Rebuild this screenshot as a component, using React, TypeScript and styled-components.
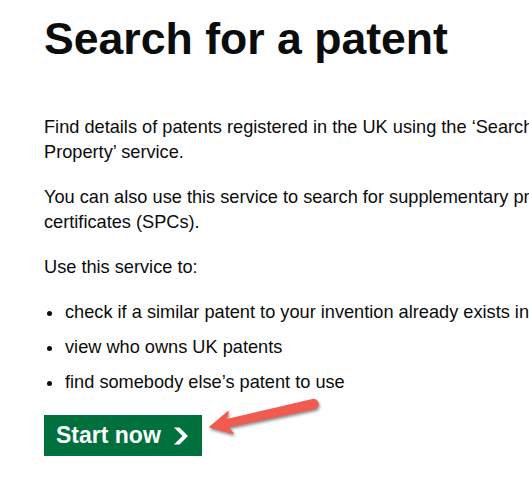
import React from 'react';
import styled, { createGlobalStyle } from 'styled-components';

const GlobalStyle = createGlobalStyle`
  html, body {
    margin: 0;
    padding: 0;
    background: #fff;
    overflow: hidden;
  }
  body {
    font-family: "Liberation Sans", Arial, sans-serif;
    color: #0b0c0c;
  }
`;

const Page = styled.main`
  position: relative;
  width: 630px;
  padding: 14px 0 0 44px;
`;

const Heading = styled.h1`
  margin: 0 0 51px;
  font-size: 44.6px;
  line-height: 50px;
  font-weight: 700;
  color: #0b0c0c;
`;

const Body = styled.p`
  margin: 0 0 20px;
  font-size: 18.2px;
  line-height: 25px;
`;

const BulletList = styled.ul`
  list-style: none;
  margin: 0 0 20px;
  padding: 0;
`;

const Item = styled.li`
  display: flex;
  font-size: 18.2px;
  line-height: 25px;
  margin-bottom: 10px;
  white-space: nowrap;

  &:last-child {
    margin-bottom: 0;
  }

  &::before {
    content: '';
    flex: none;
    width: 5px;
    height: 5px;
    margin: 11px 13px 0 3px;
    border-radius: 50%;
    background: #0b0c0c;
  }
`;

const StartButton = styled.a`
  display: inline-flex;
  align-items: center;
  gap: 13px;
  height: 41px;
  padding: 0 14px 0 12px;
  background: #00703c;
  box-shadow: 0 2px 0 #002d18;
  color: #fff;
  font-size: 23px;
  font-weight: 700;
  text-decoration: none;
  cursor: pointer;
`;

const Chevron = styled.svg`
  width: 14px;
  height: 18px;
  flex: none;
`;

const Callout = styled.svg`
  position: absolute;
  left: 200px;
  top: 385px;
  width: 135px;
  height: 60px;
  overflow: visible;
  filter: drop-shadow(1px 2px 1.5px rgba(0, 0, 0, 0.45));
`;

const bullets = [
  'check if a similar patent to your invention already exists in the UK',
  'view who owns UK patents',
  'find somebody else\u2019s patent to use',
];

const App: React.FC = () => {
  return (
    <>
      <GlobalStyle />
      <Page>
        <Heading>Search for a patent</Heading>
        <Body>
          Find details of patents registered in the UK using the {'\u2018'}Search for Intellectual
          Property{'\u2019'} service.
        </Body>
        <Body>
          You can also use this service to search for supplementary protection certificates (SPCs).
        </Body>
        <Body>Use this service to:</Body>
        <BulletList>
          {bullets.map((b) => (
            <Item key={b}>{b}</Item>
          ))}
        </BulletList>
        <StartButton role="button">
          Start now
          <Chevron viewBox="0 0 33 40" aria-hidden="true">
            <path fill="currentColor" d="M0 0h13l20 20-20 20H0l20-20z" />
          </Chevron>
        </StartButton>

        <Callout viewBox="0 0 135 60" aria-hidden="true">
          <g transform="translate(10 42) rotate(-12.5)">
            <path
              d="M0 0 L21 -11 L17 -3.5 L106 -4.5 A4.5 4.5 0 0 1 106 4.5 L17 3.5 L21 11 Z"
              fill="#f15a4f"
              stroke="#f15a4f"
              strokeWidth="1.5"
              strokeLinejoin="round"
            />
          </g>
        </Callout>
      </Page>
    </>
  );
};

export default App;
